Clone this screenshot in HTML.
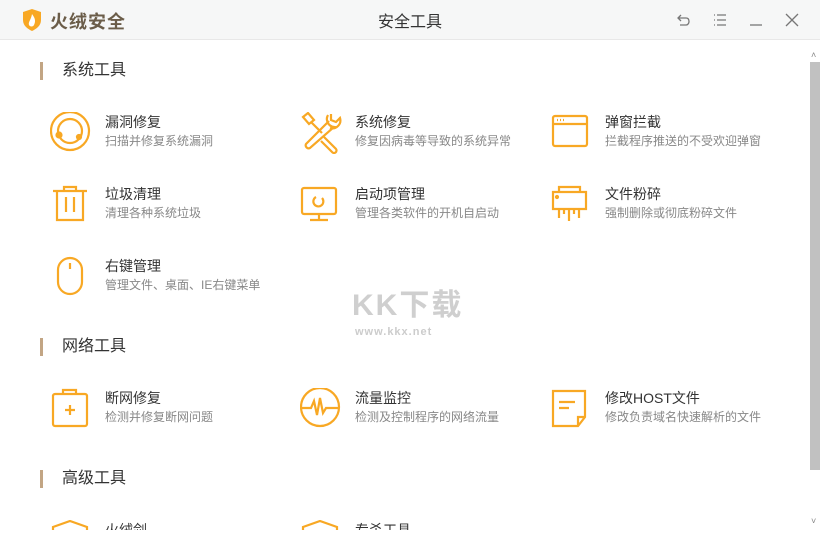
<!DOCTYPE html>
<html><head><meta charset="utf-8"><style>
*{margin:0;padding:0;box-sizing:border-box}
body{width:820px;height:540px;overflow:hidden;background:#fff;font-family:"Liberation Sans","Noto Sans CJK SC",sans-serif;position:relative}
.hdr{position:absolute;left:0;top:0;width:820px;height:40px;background:#f6f7f7;border-bottom:1px solid #e8e8e8}
.logo{position:absolute;left:22px;top:9px}
.brand{position:absolute;left:50px;top:8px;font-size:18px;font-weight:bold;color:#6b5d49;letter-spacing:1px}
.title{position:absolute;left:0;width:820px;top:8px;text-align:center;font-size:16px;color:#333}
.ctl{position:absolute;top:12px}
.content{position:absolute;left:0;top:40px;width:820px;height:490px;overflow:hidden}
.sec{position:absolute;left:40px;font-size:16px;color:#333;padding-left:22px;line-height:18px}
.sec:before{content:"";position:absolute;left:0;top:0;width:3px;height:18px;background:#c2a584}
.it{position:absolute}
.it svg{position:absolute;left:0;top:0}
.it .t{position:absolute;left:55px;top:0;font-size:14px;color:#333;white-space:nowrap}
.it .d{position:absolute;left:55px;top:20px;font-size:12px;color:#888;white-space:nowrap}
.sb{position:absolute;left:810px;top:62px;width:10px;height:408px;background:#c1c1c1}
.wm{position:absolute;left:352px;top:240px;font-size:30px;font-weight:bold;color:#cfcfcf;letter-spacing:2px}
.wm2{position:absolute;left:355px;top:286px;font-size:11px;color:#ccc;font-weight:bold;letter-spacing:1px}
</style></head><body>
<div class="hdr">
<svg class="logo" width="20" height="22" viewBox="0 0 20 22"><path d="M1 3L10 0L19 3V11C19 17 14 20 10 22C6 20 1 17 1 11Z" fill="#f8a824"/><path d="M10 5C13 9 14 12 12 16C11 18 8 18 7 16C6 13 9 11 10 5Z" fill="#fff"/></svg>
<div class="brand">火绒安全</div>
<div class="title">安全工具</div>
<svg class="ctl" style="left:676px" width="16" height="16" viewBox="0 0 16 16" fill="none" stroke="#777" stroke-width="1.3"><path d="M5 3L2 6L5 9M2 6H10C12.5 6 13 8 13 9.5S12 13 10 13H4"/></svg>
<svg class="ctl" style="left:712px" width="16" height="16" viewBox="0 0 16 16" fill="none" stroke="#777" stroke-width="1.3"><path d="M2 3H3M2 8H3M2 13H3M5 3H14M5 8H14M5 13H14"/></svg>
<svg class="ctl" style="left:748px" width="16" height="16" viewBox="0 0 16 16" fill="none" stroke="#777" stroke-width="1.3"><path d="M2 13H14"/></svg>
<svg class="ctl" style="left:784px" width="16" height="16" viewBox="0 0 16 16" fill="none" stroke="#777" stroke-width="1.3"><path d="M2 2L14 14M14 2L2 14"/></svg>
</div>
<div class="content">
<div class="sec" style="top:22px">系统工具</div>

<div class="it" style="left:50px;top:72px"><svg width="42" height="42" viewBox="0 0 42 42" fill="none" stroke="#f8a824" stroke-width="2.2"><circle cx="20" cy="19" r="19"/><circle cx="20" cy="19" r="12"/><circle cx="9" cy="23" r="2.5" fill="#f8a824"/><circle cx="29" cy="25" r="2" fill="#f8a824"/></svg><div class="t">漏洞修复</div><div class="d">扫描并修复系统漏洞</div></div>
<div class="it" style="left:300px;top:72px"><svg width="42" height="42" viewBox="0 0 42 42" fill="none" stroke="#f8a824" stroke-width="2.2"><path d="M3 5L8 1L14 8L9 12Z M11 10L22 21"/><path d="M28 3A8 8 0 0 0 34 15L34 15L10 36A3 3 0 0 1 6 32L29 9M31 2L31 8L36 10L40 6A8 8 0 0 1 30 16"/><path d="M24 25L36 37A2.5 2.5 0 0 1 32 40L21 29"/></svg><div class="t">系统修复</div><div class="d">修复因病毒等导致的系统异常</div></div>
<div class="it" style="left:550px;top:72px"><svg width="42" height="42" viewBox="0 0 42 42" fill="none" stroke="#f8a824" stroke-width="2.2"><rect x="3" y="4" width="34" height="30" rx="2"/><path d="M3 12H37"/><path d="M7 8H8M10 8H11M13 8H14"/></svg><div class="t">弹窗拦截</div><div class="d">拦截程序推送的不受欢迎弹窗</div></div>

<div class="it" style="left:50px;top:144px"><svg width="42" height="42" viewBox="0 0 42 42" fill="none" stroke="#f8a824" stroke-width="2.2"><path d="M3 7H37M14 7V3H26V7M7 7V36H33V7M16 13V28M24 13V28"/></svg><div class="t">垃圾清理</div><div class="d">清理各种系统垃圾</div></div>
<div class="it" style="left:300px;top:144px"><svg width="42" height="42" viewBox="0 0 42 42" fill="none" stroke="#f8a824" stroke-width="2.2"><rect x="2" y="4" width="34" height="26" rx="2"/><path d="M19 30V36M10 36H28"/><path d="M22 14A5 5 0 1 1 16 13" /></svg><div class="t">启动项管理</div><div class="d">管理各类软件的开机自启动</div></div>
<div class="it" style="left:550px;top:144px"><svg width="42" height="42" viewBox="0 0 42 42" fill="none" stroke="#f8a824" stroke-width="2.2"><path d="M9 8V3H30V8M3 8H36V25H3Z M9 25V34M14 25V30M19 25V37M24 25V30M29 25V34"/><circle cx="7" cy="13" r="1" fill="#f8a824"/></svg><div class="t">文件粉碎</div><div class="d">强制删除或彻底粉碎文件</div></div>

<div class="it" style="left:50px;top:216px"><svg width="42" height="42" viewBox="0 0 42 42" fill="none" stroke="#f8a824" stroke-width="2.2"><rect x="8" y="2" width="24" height="36" rx="12"/><path d="M20 7V13"/></svg><div class="t">右键管理</div><div class="d">管理文件、桌面、IE右键菜单</div></div>

<div class="wm">KK下载</div>
<div class="wm2">www.kkx.net</div>

<div class="sec" style="top:298px">网络工具</div>
<div class="it" style="left:50px;top:348px"><svg width="42" height="42" viewBox="0 0 42 42" fill="none" stroke="#f8a824" stroke-width="2.2"><path d="M13 6V2H26V6"/><rect x="3" y="6" width="34" height="32" rx="2"/><path d="M20 17V27M15 22H25"/></svg><div class="t">断网修复</div><div class="d">检测并修复断网问题</div></div>
<div class="it" style="left:300px;top:348px"><svg width="42" height="42" viewBox="0 0 42 42" fill="none" stroke="#f8a824" stroke-width="2.2"><circle cx="20" cy="19" r="19"/><path d="M1 20H11L14 13L17 27L20 10L23 25L26 20H39"/></svg><div class="t">流量监控</div><div class="d">检测及控制程序的网络流量</div></div>
<div class="it" style="left:550px;top:348px"><svg width="42" height="42" viewBox="0 0 42 42" fill="none" stroke="#f8a824" stroke-width="2.2"><path d="M3 3H35V29L28 38H3Z M35 29H28V38"/><path d="M9 14H25M9 20H19"/></svg><div class="t">修改HOST文件</div><div class="d">修改负责域名快速解析的文件</div></div>

<div class="sec" style="top:430px">高级工具</div>
<div class="it" style="left:50px;top:480px"><svg width="42" height="42" viewBox="0 0 42 42" fill="none" stroke="#f8a824" stroke-width="2.2"><path d="M3 7L20 1L37 7V30H3Z"/></svg><div class="t">火绒剑</div></div>
<div class="it" style="left:300px;top:480px"><svg width="42" height="42" viewBox="0 0 42 42" fill="none" stroke="#f8a824" stroke-width="2.2"><path d="M3 7L20 1L37 7V30H3Z"/></svg><div class="t">专杀工具</div></div>
</div>
<div class="sb"></div>
<div style="position:absolute;left:811px;top:50px;font-size:9px;color:#888">˄</div>
<div style="position:absolute;left:811px;top:516px;font-size:9px;color:#888">˅</div>
</body></html>
